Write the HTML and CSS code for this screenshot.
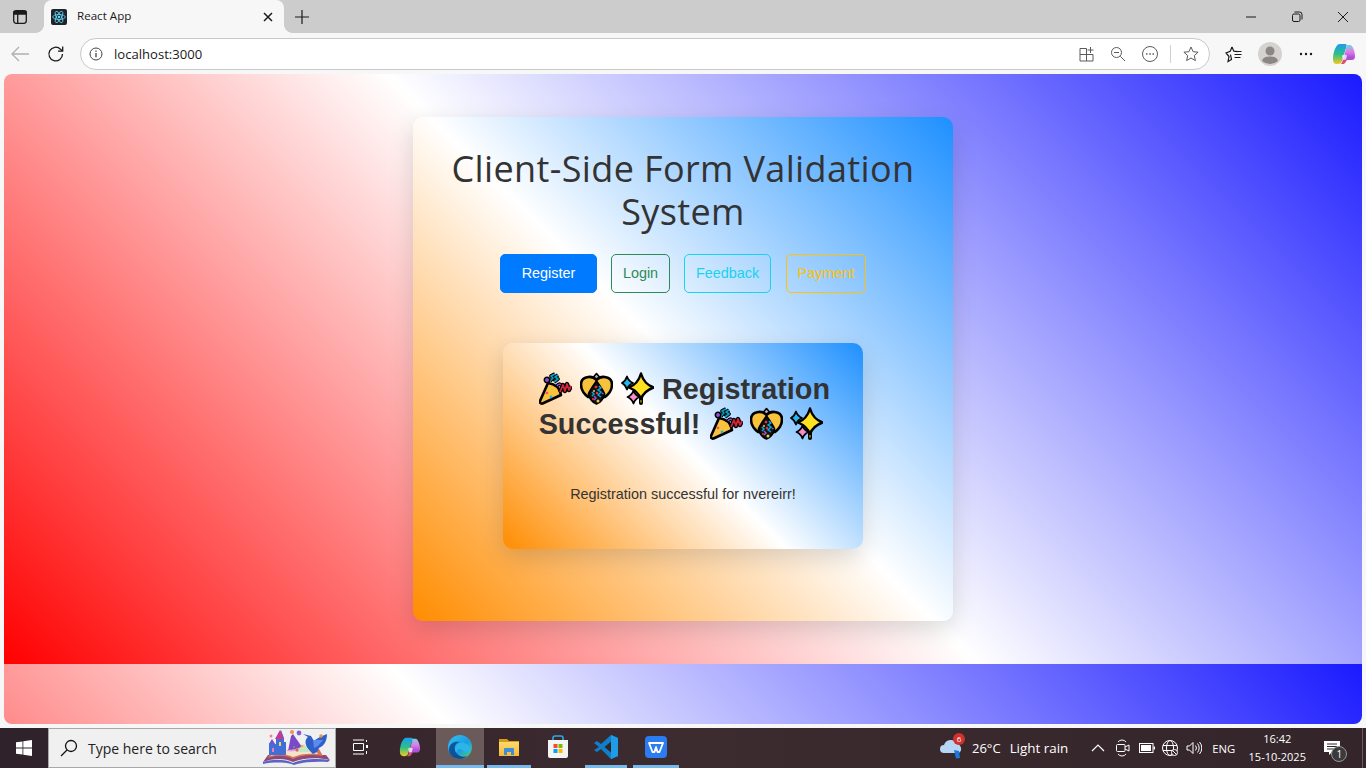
FILE: index.html
```html
<!DOCTYPE html>
<html lang="en">
<head>
<meta charset="utf-8">
<title>React App</title>
<link rel="stylesheet" href="styles.css">
</head>
<body>
<svg class="defs" width="0" height="0">
  <defs>
    <linearGradient id="edgeA" x1="0" y1="0" x2="1" y2="1"><stop offset="0" stop-color="#35c1f1"/><stop offset=".55" stop-color="#1b9de2"/><stop offset="1" stop-color="#54d26a"/></linearGradient>
    <linearGradient id="edgeB" x1="0" y1="0" x2="1" y2="1"><stop offset="0" stop-color="#0c59a4"/><stop offset="1" stop-color="#114a8b"/></linearGradient>
    <linearGradient id="copA" x1="0" y1="0" x2="0" y2="1"><stop offset="0" stop-color="#1e9bf0"/><stop offset=".5" stop-color="#27c08a"/><stop offset="1" stop-color="#f5c820"/></linearGradient>
    <linearGradient id="copB" x1="0" y1="0" x2="0" y2="1"><stop offset="0" stop-color="#6fd4ea"/><stop offset=".35" stop-color="#e07fe0"/><stop offset=".65" stop-color="#a850e8"/><stop offset="1" stop-color="#f0503c"/></linearGradient>
    <linearGradient id="folder" x1="0" y1="0" x2="0" y2="1"><stop offset="0" stop-color="#ffd968"/><stop offset="1" stop-color="#f4b93c"/></linearGradient>
    <symbol id="copilot" viewBox="0 0 24 24">
      <path d="M8 2h5c1 0 1.500.5 1.800 1.500L10 19c-.5 2-2 3-4 3H5c-3 0-4-2-4-5C1 10 4 2 8 2z" fill="url(#copA)"/>
      <path d="M13.500 3H18c3 0 5 7 5 11 0 3-1.500 4-3 4h-5l-2 3c-.5 1-2 1-3 1H8.500c1.200-.6 1.800-1.500 2-3L14.500 5c0-1-.3-1.600-1-2z" fill="url(#copB)"/>
      <path d="M10 13.500l2.500-1 2.500 1-1 4-3 .5z" fill="#fff" opacity=".75"/>
    </symbol>
    <symbol id="popper" viewBox="0 0 33 33">
      <path d="M9 11 C17 12 21 17 22 23 L3.500 31.500 C1.500 32 .5 30.500 1 29 Z" fill="#f9c23c" stroke="#000" stroke-width="2.600" stroke-linejoin="round"/>
      <circle cx="8" cy="21" r="1.300" fill="#f3506a"/><circle cx="12" cy="25" r="1.400" fill="#1fb0e8"/>
      <path d="M11 9 L14 6 L12 4 L16 2 M15 10 L19 7 L16 5 L19 3" fill="none" stroke="#000" stroke-width="3.800" stroke-linejoin="round"/>
      <path d="M11 9 L14 6 L12 4 L16 2 M15 10 L19 7 L16 5 L19 3" fill="none" stroke="#0a9fc4" stroke-width="1.700" stroke-linejoin="round"/>
      <circle cx="8" cy="8" r="2.700" fill="#8d4fd5" stroke="#000" stroke-width="1.500"/>
      <path d="M18 14 C20 11 22 12 23 15" fill="none" stroke="#000" stroke-width="3.600"/>
      <path d="M18 14 C20 11 22 12 23 15" fill="none" stroke="#8d4fd5" stroke-width="1.500"/>
      <path d="M21 20 L24 13 L26 19 L28 12 L30 18 L32 14" fill="none" stroke="#000" stroke-width="4.400" stroke-linejoin="round"/>
      <path d="M21 20 L24 13 L26 19 L28 12 L30 18 L32 14" fill="none" stroke="#d0263a" stroke-width="1.800" stroke-linejoin="round"/>
    </symbol>
    <symbol id="confetti" viewBox="0 0 33 33">
      <path d="M16.500 9 L13.500 5 L16.500 1.500 L19.500 5 Z" fill="#b4acbc" stroke="#000" stroke-width="1.600" stroke-linejoin="round"/>
      <path d="M16.500 8 C12 3 1 4 1 12.500 C1 18 4 22 8 25 L25 25 C29 22 32 18 32 12.500 C32 4 21 3 16.500 8 Z" fill="#f9c23c" stroke="#000" stroke-width="2.600" stroke-linejoin="round"/>
      <path d="M16.500 9 C13 14 10 18 8.500 22 C9.500 27 13 31 16.500 32 C20 31 23.500 27 24.500 22 C23 18 20 14 16.500 9 Z" fill="#141414" stroke="#000" stroke-width="1.800" stroke-linejoin="round"/>
      <path d="M12 20 L14 22 L12 24 M19 14 L21 16 L18 18 L21 20 L18 23 L21 25" fill="none" stroke="#0ea5dd" stroke-width="1.500"/>
      <path d="M14 24 L16 26 L14 28 M22 21 L23.500 22" fill="none" stroke="#8d5fd3" stroke-width="1.500"/>
      <circle cx="16" cy="15" r="1.300" fill="#f8312f"/><circle cx="14" cy="19" r="1" fill="#f9c23c"/><circle cx="17" cy="21" r="1.200" fill="#f8312f"/><circle cx="18" cy="29" r="1.500" fill="#f9c23c"/><circle cx="13" cy="27" r="1" fill="#f8312f"/>
    </symbol>
    <symbol id="sparkles" viewBox="0 0 33 33">
      <path d="M20 15 L20 31" stroke="#000" stroke-width="4" stroke-linecap="round"/>
      <path d="M20 17 L20 30" stroke="#9a9000" stroke-width="1.600" stroke-linecap="round"/>
      <path d="M20 1.500 Q23 12 32.500 15.500 Q23 19 20 27 Q17 19 8 15.500 Q17 12 20 1.500 Z" fill="#ffe11f" stroke="#000" stroke-width="2.400" stroke-linejoin="round"/>
      <path d="M6 4.500 Q7.500 9 12 11 Q7.500 13 6 17.500 Q4.500 13 1 11 Q4.500 9 6 4.500 Z" fill="#22b8ee" stroke="#000" stroke-width="1.800" stroke-linejoin="round"/>
      <path d="M12.500 18.500 Q14 23 18.500 25 Q14 27 12.500 31.500 Q11 27 6.500 25 Q11 23 12.500 18.500 Z" fill="#f48fc8" stroke="#000" stroke-width="1.800" stroke-linejoin="round"/>
    </symbol>
  </defs>
</svg>

<div class="window">
  <header class="tabbar">
    <div class="panes">
      <svg width="16" height="16" viewBox="0 0 16 16" fill="none" stroke="#1a1a1a" stroke-width="1.300"><rect x="1.700" y="1.700" width="12.600" height="12.600" rx="2.500"/><path d="M2 4.800h12M5.700 4.800v9.500"/><path d="M2 2.500h12v2.300h-12z" fill="#1a1a1a"/></svg>
    </div>
    <div class="tab">
      <svg class="favicon" width="16" height="16" viewBox="0 0 16 16"><rect width="16" height="16" rx="2" fill="#20232a"/><g fill="none" stroke="#61dafb" stroke-width=".8"><ellipse cx="8" cy="8" rx="6.300" ry="2.500"/><ellipse cx="8" cy="8" rx="6.300" ry="2.500" transform="rotate(60 8 8)"/><ellipse cx="8" cy="8" rx="6.300" ry="2.500" transform="rotate(120 8 8)"/></g><circle cx="8" cy="8" r="1.300" fill="#61dafb"/></svg>
      <span class="tab-title">React App</span>
      <svg class="tab-close" width="10" height="10" viewBox="0 0 10 10" stroke="#1a1a1a" stroke-width="1.500"><path d="M1 1l8 8M9 1l-8 8"/></svg>
    </div>
    <svg class="newtab" width="16" height="16" viewBox="0 0 16 16" stroke="#1a1a1a" stroke-width="1.200"><path d="M8 1v14M1 8h14"/></svg>
    <div class="winctl">
      <svg width="12" height="12" viewBox="0 0 12 12" stroke="#1a1a1a"><path d="M1 6h10"/></svg>
      <svg width="12" height="12" viewBox="0 0 12 12" fill="none" stroke="#1a1a1a"><rect x="1.500" y="3" width="7.500" height="7.500" rx="1.500"/><path d="M3.500 1h5a2.500 2.500 0 0 1 2.500 2.500v5"/></svg>
      <svg width="12" height="12" viewBox="0 0 12 12" stroke="#1a1a1a"><path d="M1 1l10 10M11 1l-10 10"/></svg>
    </div>
  </header>

  <nav class="toolbar">
    <svg class="tb-back" width="20" height="20" viewBox="0 0 20 20" fill="none" stroke="#b0b0b0" stroke-width="1.300"><path d="M2 10h17M9 3l-7 7 7 7"/></svg>
    <svg class="tb-reload" width="18" height="18" viewBox="0 0 18 18" fill="none" stroke="#1a1a1a" stroke-width="1.300"><path d="M15.500 9a6.800 6.800 0 1 1-2-4.800L15.500 6"/><path d="M15.700 1.500V6.200H11"/></svg>
    <div class="address">
      <svg width="14" height="14" viewBox="0 0 14 14" fill="none" stroke="#444"><circle cx="7" cy="7" r="6"/><path d="M7 6v4.200M7 3.600v1.200" stroke-width="1.300"/></svg>
      <span class="url">localhost:3000</span>
      <div class="addr-icons">
        <svg width="16" height="16" viewBox="0 0 16 16" fill="none" stroke="#5a5a5a"><path d="M1 2.500h6.500V15H1zM1 8.500h13V15H7.500M11.500 1v6M8.500 4h6"/></svg>
        <svg class="ai-zoom" width="16" height="16" viewBox="0 0 16 16" fill="none" stroke="#5a5a5a"><circle cx="6.500" cy="6.500" r="5"/><path d="M10.300 10.300L15 15M4 6.500h5"/></svg>
        <svg class="ai-more" width="16" height="16" viewBox="0 0 16 16" fill="none" stroke="#5a5a5a"><circle cx="8" cy="8" r="7.500"/><path d="M4 8h1.500M7.300 8h1.500M10.500 8H12" stroke-width="1.500"/></svg>
        <span class="addr-sep"></span>
        <svg class="ai-star" width="16" height="16" viewBox="0 0 16 16" fill="none" stroke="#5a5a5a"><path d="M8 1l2.100 4.700 5 .5-3.800 3.400 1.100 5L8 12l-4.400 2.600 1.100-5L.9 6.200l5-.5z" stroke-linejoin="round"/></svg>
      </div>
    </div>
    <svg class="tb-fav" width="18" height="18" viewBox="0 0 18 18" fill="none" stroke="#1a1a1a" stroke-width="1.200"><path d="M7 2l1.800 4.200 4 .4M5.500 9.500l1 5-3.500 2 1-5L1 8l4.200-1.800L7 2M9.500 9.500h7M9.500 6.500h7M9.500 12.500h6"/></svg>
    <svg class="tb-avatar" width="24" height="24" viewBox="0 0 24 24"><circle cx="12" cy="12" r="12" fill="#d5d3d0"/><circle cx="12" cy="9" r="4.500" fill="#8a8785"/><path d="M4 19c1-4 5-4.500 8-4.500s7 .5 8 4.500a12 12 0 0 1-16 0z" fill="#8a8785"/></svg>
    <svg class="tb-dots" width="14" height="4" viewBox="0 0 14 4" fill="#1a1a1a"><circle cx="2" cy="2" r="1.200"/><circle cx="7" cy="2" r="1.200"/><circle cx="12" cy="2" r="1.200"/></svg>
    <svg class="tb-copilot" width="24" height="24"><use href="#copilot"/></svg>
  </nav>

  <main class="viewport">
    <section class="card">
      <h1 class="title">Client-Side Form Validation System</h1>
      <div class="tabs">
        <button class="btn btn-register">Register</button>
        <button class="btn btn-login">Login</button>
        <button class="btn btn-feedback">Feedback</button>
        <button class="btn btn-payment">Payment</button>
      </div>
      <div class="success">
        <h2 class="success-title">
          <svg class="emoji emoji-lead" role="img" aria-label="party popper"><use href="#popper"/></svg>
          <svg class="emoji" role="img" aria-label="confetti ball"><use href="#confetti"/></svg>
          <svg class="emoji" role="img" aria-label="sparkles"><use href="#sparkles"/></svg>
          Registration Successful!
          <svg class="emoji emoji-after" role="img" aria-label="party popper"><use href="#popper"/></svg>
          <svg class="emoji emoji-tight" role="img" aria-label="confetti ball"><use href="#confetti"/></svg>
          <svg class="emoji emoji-tight emoji-last" role="img" aria-label="sparkles"><use href="#sparkles"/></svg>
        </h2>
        <p class="success-text">Registration successful for nvereirr!</p>
      </div>
    </section>
  </main>

  <footer class="taskbar">
    <div class="start">
      <svg width="16" height="16" viewBox="0 0 16 16" fill="#fff"><path d="M0 2.300l6.500-.9v6.200H0zM7.300 1.300L16 0v7.600H7.300zM0 8.400h6.500v6.200L0 13.700zM7.300 8.400H16V16l-8.700-1.300z"/></svg>
    </div>
    <div class="search">
      <svg width="18" height="18" viewBox="0 0 18 18" fill="none" stroke="#111" stroke-width="1.300"><circle cx="11" cy="7" r="5.500"/><path d="M7 11l-6 6"/></svg>
      <span class="search-text">Type here to search</span>
      <svg class="search-art" width="76" height="40" viewBox="0 0 76 40">
        <path d="M3 34c10-4 22-4 30 0 9-4 24-5 37-2l-4-5H8z" fill="#8e4a74"/>
        <path d="M3 34c10-3 22-3 30 1 9-4 24-5 37-3l-2 2c-12-1-26 0-34 3-8-3-20-3-31-1z" fill="#5b62c8"/>
        <path d="M8 30c8-3 18-3 25 1 8-4 18-5 30-3l-4-7H12z" fill="#d9745a"/>
        <path d="M11 28c7-2 15-2 22 1 7-3 15-4 25-3l-3-5H14z" fill="#f6e2c8"/>
        <path d="M9 27V16l3-4 3 4h1V10l5-8 3 8v4h2v13z" fill="#3f6fd8"/>
        <path d="M15 11l5-9 4 9z" fill="#c8388f"/><path d="M9 16l3-5 3 5z" fill="#7a4fd0"/>
        <rect x="12" y="20" width="2" height="4" fill="#f07fb0"/><rect x="19" y="14" width="2" height="4" fill="#f6d458"/>
        <path d="M28 23l3-15 2-2 9 13 1 2c-5 2-10 2-15 2z" fill="#7a48c8"/>
        <path d="M27 23c5 1 11 0 15-3l-1-1c-4 2-9 3-14 3z" fill="#e8a4d8"/>
        <path d="M36 24l8-8 6 8z" fill="#bfe7c0"/>
        <circle cx="37" cy="22" r="1.500" fill="#e85b5b"/><circle cx="42" cy="18" r="1.300" fill="#f0b03c"/><circle cx="34" cy="19" r="1" fill="#55b06a"/>
        <path d="M50 23c-5-5-6-11-2-14l-5-3 8 2 3 5 1-1 5-3 7-3c0 7-3 12-8 14l-2 4-4 2z" fill="#2f5fc8"/>
        <path d="M53 12l1 8 4-2 5-6z" fill="#5a8cf0"/>
        <circle cx="11" cy="8" r="1.500" fill="#f07fa0"/><circle cx="32" cy="4" r="2" fill="#f0904c"/><circle cx="39" cy="5" r="2.400" fill="#8060d8"/><circle cx="61" cy="8" r="1.800" fill="#f0904c"/>
      </svg>
    </div>
    <div class="task task-view">
      <svg width="16" height="16" viewBox="0 0 16 16" fill="none" stroke="#fff"><path d="M1 1h11M1 15h11M1.500 4.500h10v7h-10z"/><rect x="14" y="6" width="2" height="3" fill="#fff" stroke="none"/><path d="M14.500 1v2M14.500 12v3"/></svg>
    </div>
    <div class="task task-copilot">
      <svg width="22" height="22"><use href="#copilot"/></svg>
    </div>
    <div class="task task-edge is-active">
      <svg width="24" height="24" viewBox="0 0 24 24"><circle cx="12" cy="12" r="12" fill="url(#edgeA)"/><path d="M1 15C1 8 7 6 12 7c-4 1-6 4-5 8 1 5 7 8 12 6-2 2-4 3-7 3C6 24 1 20 1 15z" fill="url(#edgeB)"/><path d="M7 15c0-5 4-8 9-7 4 1 6 3 7 6 0 2-2 3-5 3-3 0-3-3-6-3-2 0-3 1-3 3 0 0-2 0-2-2z" fill="#2ab6e8"/></svg>
    </div>
    <div class="task task-files is-open">
      <svg width="22" height="20" viewBox="0 0 22 20"><path d="M1 2h8l2 2h10v15H1z" fill="#d69a20"/><path d="M1 5h20v14H1z" fill="url(#folder)"/><path d="M6 18v-6a1 1 0 0 1 1-1h8a1 1 0 0 1 1 1v6h-3v-3H9v3z" fill="#3c8ed8"/></svg>
    </div>
    <div class="task task-store">
      <svg width="22" height="24" viewBox="0 0 22 24"><path d="M6 6V3a2 2 0 0 1 2-2h6a2 2 0 0 1 2 2v3" fill="none" stroke="#2aa9e8" stroke-width="1.600"/><path d="M1 5h20v16a2 2 0 0 1-2 2H3a2 2 0 0 1-2-2z" fill="#f4f4f4"/><rect x="6.500" y="9" width="4" height="4" fill="#f25022"/><rect x="11.500" y="9" width="4" height="4" fill="#7fba00"/><rect x="6.500" y="14" width="4" height="4" fill="#00a4ef"/><rect x="11.500" y="14" width="4" height="4" fill="#ffb900"/></svg>
    </div>
    <div class="task task-code is-open">
      <svg width="24" height="24" viewBox="0 0 24 24"><path d="M17 0l7 3v18l-7 3-10-10-4 3-3-2 5-3-5-4 3-2 4 3z" fill="#0f7fcc"/><path d="M17 0l7 3v18l-7 3z" fill="#1e9ce8"/><path d="M17 6.500l-6.500 5.500 6.500 5.500z" fill="#2f2527"/></svg>
    </div>
    <div class="task task-wps is-open">
      <svg width="22" height="22" viewBox="0 0 22 22"><rect width="22" height="22" rx="4" fill="#2b7cf0"/><path d="M4 7h14l-3.500 9h-2L11 11l-1.500 5h-2z" fill="none" stroke="#fff" stroke-width="1.800" stroke-linejoin="round"/></svg>
    </div>
    <div class="tray">
      <div class="weather">
        <svg class="weather-icon" width="24" height="24" viewBox="0 0 24 24"><path d="M4 17a4 4 0 0 1 0-8 7 7 0 0 1 13-1 5 5 0 0 1 2 9z" fill="#b5d6f5"/><path d="M14 14l5 1 1 7-4 .5z" fill="#1c78e0"/></svg>
        <span class="badge">6</span>
        <span class="temp">26°C</span>
        <span class="cond">Light rain</span>
      </div>
      <svg class="t-chev" width="14" height="8" viewBox="0 0 14 8" fill="none" stroke="#fff" stroke-width="1.200"><path d="M1 7l6-6 6 6"/></svg>
      <svg class="t-cam" width="14" height="18" viewBox="0 0 14 18" fill="none" stroke="#fff"><path d="M2 3a5 5 0 0 1 8 0M2 15a5 5 0 0 0 8 0"/><rect x=".5" y="5.500" width="8.500" height="7" rx="1"/><path d="M9 8l4-2v6l-4-2"/></svg>
      <svg class="t-bat" width="16" height="10" viewBox="0 0 16 10"><rect x=".5" y=".5" width="13.500" height="9" fill="none" stroke="#fff"/><rect x="2" y="2" width="10" height="6" fill="#fff"/><rect x="14.500" y="3.500" width="1.500" height="3" fill="#fff"/></svg>
      <svg class="t-globe" width="16" height="16" viewBox="0 0 16 16" fill="none" stroke="#fff"><circle cx="8" cy="8" r="7.500"/><ellipse cx="8" cy="8" rx="3.500" ry="7.500"/><path d="M1 5.500h14M1 10.500h14"/><circle cx="12.500" cy="12.500" r="3" fill="#352629"/><path d="M10.500 10.500l4 4"/></svg>
      <svg class="t-vol" width="16" height="14" viewBox="0 0 16 14" fill="none" stroke="#fff"><path d="M1 5h2.500L7 1.500v11L3.500 9H1zM9.500 4.500a4 4 0 0 1 0 5M11.500 2.500a7 7 0 0 1 0 9M13.500 1a9 9 0 0 1 0 12"/></svg>
      <span class="lang">ENG</span>
      <div class="clock"><span>16:42</span><span>15-10-2025</span></div>
      <div class="notif">
        <svg width="16" height="15" viewBox="0 0 16 15"><path d="M0 0h16v11H8l-3 3v-3H0z" fill="#fff"/><path d="M3 3h10M3 5.500h10M3 8h7" stroke="#352629"/></svg>
        <span class="notif-count">1</span>
      </div>
      <span class="show-desktop"></span>
    </div>
  </footer>
</div>
</body>
</html>
```

FILE: styles.css
```css
* { box-sizing: border-box; }
html, body { margin: 0; padding: 0; height: 100%; overflow: hidden; }
body { font-family: "Liberation Sans", Arial, sans-serif; color: #333; }
.defs { position: absolute; }
svg { display: block; flex: none; }

.window { width: 1366px; height: 768px; display: flex; flex-direction: column; background: #f7f7f7; }

/* tab strip */
.tabbar { height: 33px; background: #cccccc; display: flex; align-items: center; }
.panes { width: 44px; padding-left: 12px; }
.tab { position: relative; width: 240px; height: 33px; background: #f7f7f7; border-radius: 8px 8px 0 0; display: flex; align-items: center; padding: 0 0 0 7px; }
.tab::before, .tab::after { content: ""; position: absolute; bottom: 0; width: 8px; height: 8px; }
.tab::before { left: -8px; background: radial-gradient(circle at 0 0, transparent 7.5px, #f7f7f7 8px); }
.tab::after { right: -8px; background: radial-gradient(circle at 100% 0, transparent 7.5px, #f7f7f7 8px); }
.favicon { margin-right: 10px; }
.tab-title { font: 11.6px "Open Sans", sans-serif; color: #1a1a1a; flex: 1; margin-bottom: 2px; }
.tab-close { margin-right: 11px; }
.newtab { margin-left: 10px; }
.winctl { margin-left: auto; display: flex; align-items: center; gap: 34px; padding-right: 17px; }

/* toolbar */
.toolbar { height: 41px; display: flex; align-items: center; padding-left: 10px; }
.tb-reload { margin-left: 17px; }
.address { width: 1130px; height: 32px; margin-left: 15px; background: #fff; border: 1px solid #c9c9c9; border-radius: 16px; display: flex; align-items: center; padding-left: 8px; }
.url { margin-left: 11px; font: 13.1px "Open Sans", sans-serif; color: #1a1a1a; }
.addr-icons { margin-left: auto; display: flex; align-items: center; padding-right: 10px; }
.ai-zoom { margin-left: 15px; }
.ai-more { margin-left: 16px; }
.addr-sep { width: 1px; height: 18px; background: #d0d0d0; margin: 0 12px 0 12px; }
.tb-fav { margin-left: 15px; }
.tb-avatar { margin-left: 15px; }
.tb-dots { margin-left: 17px; }
.tb-copilot { margin-left: 19px; }

/* page */
.viewport { height: 650px; margin: 0 4px; border-radius: 8px; padding-top: 43px; overflow: hidden; background: linear-gradient(45deg, #ff0000, #ffffff, #1a1aff) 0 0 / 100% 590px repeat-y; }
.card { width: 540px; height: 504px; margin: 0 auto; padding: 30px 30px 0; border-radius: 10px; background: linear-gradient(45deg, #ff8c00, #ffffff, #1e90ff); box-shadow: 0 8px 24px rgba(0, 0, 0, .15); text-align: center; }
.title { margin: 0; font: 400 36px/43px "Open Sans", sans-serif; letter-spacing: .37px; color: #333; }
.tabs { margin-top: 21px; display: flex; justify-content: center; gap: 14px; }
.btn { height: 39px; padding: 0 0 1px; background: transparent; border-radius: 5px; font: 14.4px "Liberation Sans", Arial, sans-serif; }
.btn-register { width: 97px; background: #007bff; border: 1px solid #007bff; color: #fff; }
.btn-login { width: 59px; border: 1px solid #2e8b57; color: #2e8b57; }
.btn-feedback { width: 87px; border: 1px solid #17d2f0; color: #17d2f0; }
.btn-payment { width: 80px; margin-left: 1px; border: 1px solid #ffc107; color: #ffc107; }

.success { width: 360px; height: 206px; margin: 50px auto 0; padding: 29px 30px 0; border-radius: 10px; background: linear-gradient(45deg, #ff8c00, #ffffff, #1e90ff); box-shadow: 0 8px 24px rgba(0, 0, 0, .15); }
.success-title { margin: 0; font: 700 28.8px/35px "Liberation Sans", Arial, sans-serif; color: #333; }
.emoji { display: inline-block; width: 33px; height: 33px; vertical-align: -6px; }
.emoji-lead { margin-left: 3px; }
.emoji-after { margin-left: 2px; }
.emoji-tight { margin-left: -1px; }
.emoji-last { margin-right: 4px; }
.success-text { margin: 44px 0 0; font-size: 14.4px; line-height: 17px; color: #333; }

/* taskbar */
.taskbar { height: 40px; margin-top: 4px; background: linear-gradient(90deg, #30222a, #3c2b2f 50%, #33252a); display: flex; align-items: center; color: #fff; }
.start { width: 48px; display: flex; justify-content: center; }
.search { width: 288px; height: 40px; background: #f0f0f0; border: 1px solid #a8a8a8; display: flex; align-items: center; padding-left: 11px; position: relative; }
.search-text { margin-left: 10px; font: 14px "Open Sans", sans-serif; color: #222; }
.search-art { position: absolute; right: -1px; top: -1px; }
.task { height: 40px; display: flex; align-items: center; justify-content: center; border-bottom: 3px solid transparent; }
.task-view { width: 48px; }
.task-copilot { width: 52px; }
.task-edge { width: 48px; }
.task-files { width: 50px; }
.task-store { width: 48px; }
.task-code { width: 48px; }
.task-wps { width: 52px; }
.is-active { background: #6b5a5a; border-bottom-color: #76b9ed; }
.is-open { border-image: linear-gradient(90deg, transparent 4px, #76b9ed 4px, #76b9ed calc(100% - 4px), transparent calc(100% - 4px)) 1; }

.tray { flex: 1; display: flex; align-items: center; height: 40px; position: relative; font: 12.5px "Open Sans", sans-serif; }
.weather { display: flex; align-items: center; position: relative; margin-left: 258px; }
.badge { position: absolute; left: 13px; top: -3px; width: 12px; height: 12px; border-radius: 50%; background: #d0312d; font-size: 8px; line-height: 12px; text-align: center; }
.temp { margin-left: 8px; font-size: 13px; }
.cond { margin-left: 9px; font-size: 13.4px; }
.t-chev { margin-left: 23px; }
.t-cam { margin-left: 11px; }
.t-bat { margin-left: 9px; }
.t-globe { margin-left: 7px; }
.t-vol { margin-left: 8px; }
.lang { margin-left: 10px; font-size: 11.3px; }
.clock { margin-left: 13px; width: 58px; display: flex; flex-direction: column; align-items: center; font-size: 11px; line-height: 18px; white-space: nowrap; }
.notif { margin-left: 18px; position: relative; }
.notif-count { position: absolute; left: 7px; top: 5px; width: 16px; height: 16px; border-radius: 50%; background: #3a3a3a; border: 1px solid #999; font-size: 10px; line-height: 14px; text-align: center; }
.show-desktop { position: absolute; right: 3px; top: 0; width: 1px; height: 40px; background: #6a5c5e; }
```
